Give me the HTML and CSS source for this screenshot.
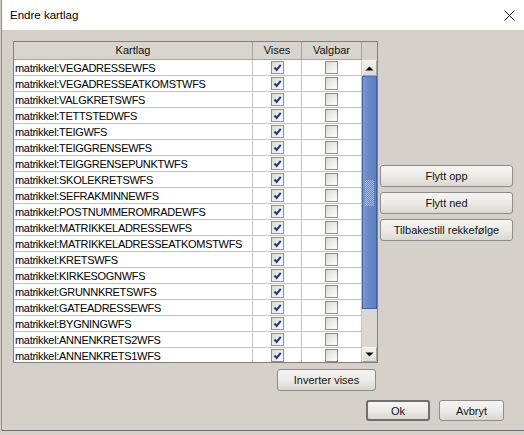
FILE: index.html
```html
<!DOCTYPE html>
<html>
<head>
<meta charset="utf-8">
<link rel="stylesheet" href="styles.css">
</head>
<body>
<div class="win">
  <div class="titlebar">
    <span class="title">Endre kartlag</span>
    <svg class="close" width="11" height="11" viewBox="0 0 11 11"><path d="M0.5 0.5 L10.5 10.5 M10.5 0.5 L0.5 10.5" stroke="#1e1e1e" stroke-width="1" fill="none"/></svg>
  </div>
  <div class="content">
    <div class="main">
      <div class="leftcol">
        <div class="table">
          <div class="thead">
            <div class="th">Kartlag</div>
            <div class="th">Vises</div>
            <div class="th">Valgbar</div>
            <div class="th corner"></div>
          </div>
          <div class="tbody">
            <div class="rows">
              <div class="row"><div class="td name">matrikkel:VEGADRESSEWFS</div><div class="td c"><span class="cb"><svg viewBox="0 0 11 11"><path d="M2.5 5.5 L4.6 8 L8.8 2.8" /></svg></span></div><div class="td c"><span class="cb"></span></div></div>
              <div class="row"><div class="td name">matrikkel:VEGADRESSEATKOMSTWFS</div><div class="td c"><span class="cb"><svg viewBox="0 0 11 11"><path d="M2.5 5.5 L4.6 8 L8.8 2.8" /></svg></span></div><div class="td c"><span class="cb"></span></div></div>
              <div class="row"><div class="td name">matrikkel:VALGKRETSWFS</div><div class="td c"><span class="cb"><svg viewBox="0 0 11 11"><path d="M2.5 5.5 L4.6 8 L8.8 2.8" /></svg></span></div><div class="td c"><span class="cb"></span></div></div>
              <div class="row"><div class="td name">matrikkel:TETTSTEDWFS</div><div class="td c"><span class="cb"><svg viewBox="0 0 11 11"><path d="M2.5 5.5 L4.6 8 L8.8 2.8" /></svg></span></div><div class="td c"><span class="cb"></span></div></div>
              <div class="row"><div class="td name">matrikkel:TEIGWFS</div><div class="td c"><span class="cb"><svg viewBox="0 0 11 11"><path d="M2.5 5.5 L4.6 8 L8.8 2.8" /></svg></span></div><div class="td c"><span class="cb"></span></div></div>
              <div class="row"><div class="td name">matrikkel:TEIGGRENSEWFS</div><div class="td c"><span class="cb"><svg viewBox="0 0 11 11"><path d="M2.5 5.5 L4.6 8 L8.8 2.8" /></svg></span></div><div class="td c"><span class="cb"></span></div></div>
              <div class="row"><div class="td name">matrikkel:TEIGGRENSEPUNKTWFS</div><div class="td c"><span class="cb"><svg viewBox="0 0 11 11"><path d="M2.5 5.5 L4.6 8 L8.8 2.8" /></svg></span></div><div class="td c"><span class="cb"></span></div></div>
              <div class="row"><div class="td name">matrikkel:SKOLEKRETSWFS</div><div class="td c"><span class="cb"><svg viewBox="0 0 11 11"><path d="M2.5 5.5 L4.6 8 L8.8 2.8" /></svg></span></div><div class="td c"><span class="cb"></span></div></div>
              <div class="row"><div class="td name">matrikkel:SEFRAKMINNEWFS</div><div class="td c"><span class="cb"><svg viewBox="0 0 11 11"><path d="M2.5 5.5 L4.6 8 L8.8 2.8" /></svg></span></div><div class="td c"><span class="cb"></span></div></div>
              <div class="row"><div class="td name">matrikkel:POSTNUMMEROMRADEWFS</div><div class="td c"><span class="cb"><svg viewBox="0 0 11 11"><path d="M2.5 5.5 L4.6 8 L8.8 2.8" /></svg></span></div><div class="td c"><span class="cb"></span></div></div>
              <div class="row"><div class="td name">matrikkel:MATRIKKELADRESSEWFS</div><div class="td c"><span class="cb"><svg viewBox="0 0 11 11"><path d="M2.5 5.5 L4.6 8 L8.8 2.8" /></svg></span></div><div class="td c"><span class="cb"></span></div></div>
              <div class="row"><div class="td name">matrikkel:MATRIKKELADRESSEATKOMSTWFS</div><div class="td c"><span class="cb"><svg viewBox="0 0 11 11"><path d="M2.5 5.5 L4.6 8 L8.8 2.8" /></svg></span></div><div class="td c"><span class="cb"></span></div></div>
              <div class="row"><div class="td name">matrikkel:KRETSWFS</div><div class="td c"><span class="cb"><svg viewBox="0 0 11 11"><path d="M2.5 5.5 L4.6 8 L8.8 2.8" /></svg></span></div><div class="td c"><span class="cb"></span></div></div>
              <div class="row"><div class="td name">matrikkel:KIRKESOGNWFS</div><div class="td c"><span class="cb"><svg viewBox="0 0 11 11"><path d="M2.5 5.5 L4.6 8 L8.8 2.8" /></svg></span></div><div class="td c"><span class="cb"></span></div></div>
              <div class="row"><div class="td name">matrikkel:GRUNNKRETSWFS</div><div class="td c"><span class="cb"><svg viewBox="0 0 11 11"><path d="M2.5 5.5 L4.6 8 L8.8 2.8" /></svg></span></div><div class="td c"><span class="cb"></span></div></div>
              <div class="row"><div class="td name">matrikkel:GATEADRESSEWFS</div><div class="td c"><span class="cb"><svg viewBox="0 0 11 11"><path d="M2.5 5.5 L4.6 8 L8.8 2.8" /></svg></span></div><div class="td c"><span class="cb"></span></div></div>
              <div class="row"><div class="td name">matrikkel:BYGNINGWFS</div><div class="td c"><span class="cb"><svg viewBox="0 0 11 11"><path d="M2.5 5.5 L4.6 8 L8.8 2.8" /></svg></span></div><div class="td c"><span class="cb"></span></div></div>
              <div class="row"><div class="td name">matrikkel:ANNENKRETS2WFS</div><div class="td c"><span class="cb"><svg viewBox="0 0 11 11"><path d="M2.5 5.5 L4.6 8 L8.8 2.8" /></svg></span></div><div class="td c"><span class="cb"></span></div></div>
              <div class="row"><div class="td name">matrikkel:ANNENKRETS1WFS</div><div class="td c"><span class="cb"><svg viewBox="0 0 11 11"><path d="M2.5 5.5 L4.6 8 L8.8 2.8" /></svg></span></div><div class="td c"><span class="cb"></span></div></div>
            </div>
            <div class="vscroll">
              <div class="sbtn"><svg width="9" height="5" viewBox="0 0 9 5"><path d="M0.5 4.5 L4.5 0.5 L8.5 4.5 Z" fill="#000"/></svg></div>
              <div class="track">
                <div class="thumb"><div class="grip"></div></div>
              </div>
              <div class="sbtn down"><svg width="9" height="5" viewBox="0 0 9 5"><path d="M0.5 0.5 L4.5 4.5 L8.5 0.5 Z" fill="#000"/></svg></div>
            </div>
          </div>
        </div>
        <button class="btn inv">Inverter vises</button>
      </div>
      <div class="rightcol">
        <button class="btn side">Flytt opp</button>
        <button class="btn side">Flytt ned</button>
        <button class="btn side">Tilbakestill rekkefølge</button>
      </div>
    </div>
    <div class="footer">
      <button class="btn ok">Ok</button>
      <button class="btn cancel">Avbryt</button>
    </div>
  </div>
</div>
</body>
</html>
```

FILE: styles.css
```css
html, body {
  margin: 0;
  padding: 0;
  background: #d5d1ca;
}
body {
  width: 524px;
  height: 435px;
  overflow: hidden;
  font-family: "Liberation Sans", Arial, sans-serif;
  font-size: 11px;
  color: #000;
}
.win {
  margin-left: 1px;
  border-left: 1px solid #8a8a8a;
  width: 522px;
}
.titlebar {
  height: 30px;
  background: #fff;
  display: flex;
  align-items: center;
  justify-content: space-between;
  padding-left: 8px;
  padding-right: 9px;
  box-sizing: border-box;
}
.title {
  font-size: 11.5px;
  color: #000;
  padding-bottom: 1px;
}
.close {
  display: block;
}
.content {
  height: 401px;
  background: #d5d1ca;
  border-bottom: 1px solid #6e6e6e;
  padding: 11px 0 0 11px;
  box-sizing: border-box;
  display: flex;
  flex-direction: column;
}
.main {
  display: flex;
  align-items: flex-start;
}
.leftcol {
  display: flex;
  flex-direction: column;
  align-items: flex-end;
}
.table {
  width: 365px;
  border: 1px solid #7f7f7f;
  box-sizing: border-box;
  background: #d5d1ca;
}
.thead {
  display: grid;
  grid-template-columns: 239px 49px 60px 15px;
  height: 18px;
}
.th {
  box-sizing: border-box;
  border-right: 1px solid #a3a3a3;
  border-bottom: 1px solid #a3a3a3;
  background: #d8d5ce;
  display: flex;
  align-items: center;
  justify-content: center;
  font-size: 11px;
  color: #111;
  padding-bottom: 1px;
}
.th.corner {
  border: none;
  background: #d5d1ca;
}
.tbody {
  display: flex;
  height: 302px;
}
.rows {
  width: 348px;
  height: 302px;
  overflow: hidden;
  background: #fff;
}
.row {
  display: grid;
  grid-template-columns: 239px 49px 60px;
  height: 16px;
  box-sizing: border-box;
  border-bottom: 1px solid #c4c4c4;
}
.td {
  box-sizing: border-box;
  border-right: 1px solid #c4c4c4;
  display: flex;
  align-items: center;
  white-space: nowrap;
  overflow: hidden;
}
.td.name {
  padding-left: 1px;
  letter-spacing: -0.3px;
  font-size: 11px;
  color: #000;
}
.td.c {
  justify-content: center;
}
.cb {
  width: 13px;
  height: 13px;
  box-sizing: border-box;
  border: 1px solid #8d8e8e;
  background: linear-gradient(135deg, #d8d8d4 0%, #eeeeec 55%, #fdfdfd 100%);
  display: flex;
  align-items: center;
  justify-content: center;
}
.cb svg {
  width: 11px;
  height: 11px;
  display: block;
}
.cb svg path {
  fill: none;
  stroke: #223a80;
  stroke-width: 2;
}
.vscroll {
  width: 15px;
  height: 302px;
  display: flex;
  flex-direction: column;
  background: #dbd8d2;
}
.sbtn {
  height: 16px;
  box-sizing: border-box;
  border: 1px solid #f4f3f0;
  border-right-color: #a9a7a2;
  border-bottom-color: #a9a7a2;
  background: linear-gradient(#f2f1ee, #dedbd5);
  display: flex;
  align-items: center;
  justify-content: center;
}
.sbtn.down {
  height: 15px;
}
.track {
  flex: 1;
  display: flex;
  flex-direction: column;
}
.thumb {
  height: 233px;
  box-sizing: border-box;
  border-left: 1px solid #3f5f9f;
  border-right: 1px solid #3f5f9f;
  border-top: 1px solid #5574b0;
  border-bottom: 1px solid #3f5f9f;
  background: linear-gradient(to right, #7e99d2 0%, #6b8acb 35%, #5d7fc2 100%);
  display: flex;
  align-items: center;
  justify-content: center;
}
.grip {
  width: 9px;
  height: 26px;
  background-image: conic-gradient(#a6bbe8 25%, transparent 0 50%, #a6bbe8 0 75%, transparent 0);
  background-size: 2px 2px;
}
.btn {
  font-family: "Liberation Sans", Arial, sans-serif;
  font-size: 11px;
  color: #111;
  border: 1px solid #8d8d8b;
  border-radius: 3px;
  background: linear-gradient(#f6f5f2 0%, #ecebe7 50%, #dad7d1 100%);
  box-sizing: border-box;
  padding: 0;
  margin: 0;
  display: flex;
  align-items: center;
  justify-content: center;
}
.inv {
  width: 99px;
  height: 22px;
  margin-top: 6px;
  margin-right: 2px;
}
.rightcol {
  display: flex;
  flex-direction: column;
  gap: 5px;
  margin-left: 2px;
  margin-top: 124px;
}
.side {
  width: 133px;
  height: 22px;
}
.footer {
  display: flex;
  justify-content: flex-end;
  gap: 9px;
  margin-top: 9px;
  padding-right: 20px;
}
.ok {
  width: 64px;
  height: 21px;
  border: 2px solid #6f6f6d;
}
.cancel {
  width: 65px;
  height: 21px;
}
```
